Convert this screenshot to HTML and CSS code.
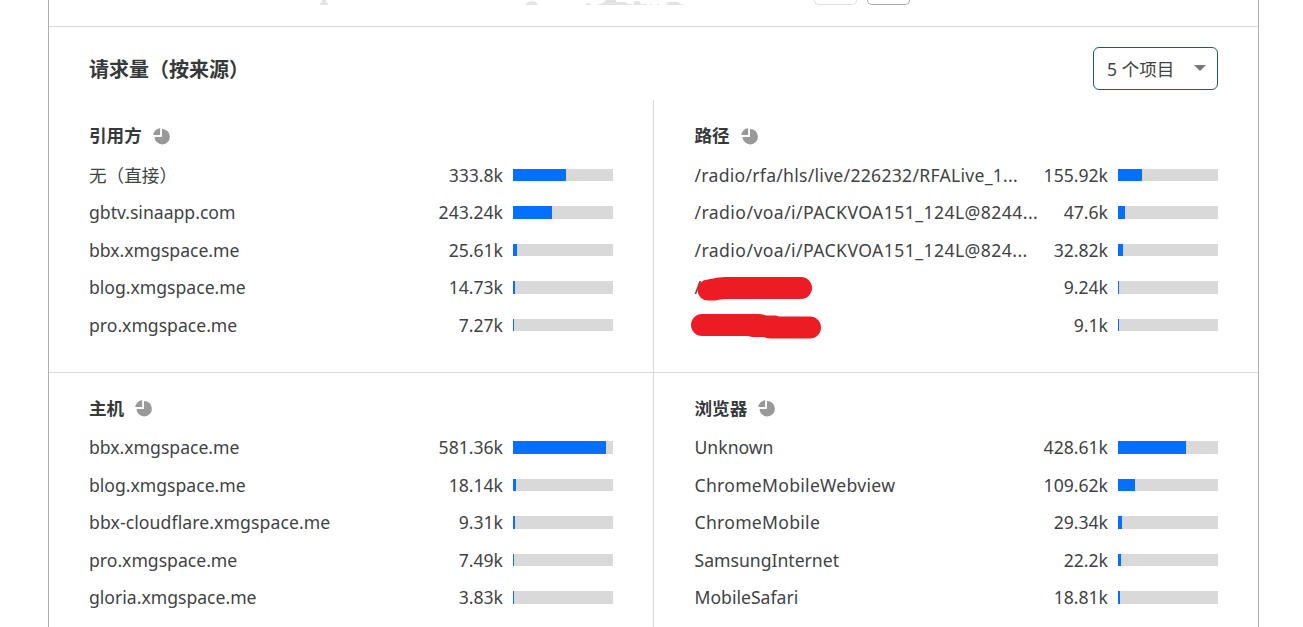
FILE: index.html
```html
<!DOCTYPE html>
<html lang="zh-CN">
    <head>
        <meta charset="UTF-8">
        <meta name="viewport" content="width=device-width, initial-scale=1.0">
        <title>请求量</title>
        <link rel="stylesheet" href="styles.css">
    </head>
    <body>
        <svg class="symbols">
            <symbol id="pie" viewBox="0 0 17 17">
                <path d="M7.1 0.3V7.1H0.3A7.2 7.2 0 0 1 7.1 0.3Z"/>
                <path d="M9 1A7.7 7.7 0 1 1 1.5 8.9H9Z"/>
            </symbol>
        </svg>
        <div class="card">
            <div class="previous">
                <svg class="map" width="380" height="6" viewBox="0 0 380 6">
                    <path d="M0 5V3L2 2V0H6V2L8 3V5ZM205 5L208 2L212 1L216 2L218 5ZM265 5L268 3L272 5ZM277 5L283 3L286 0H296V2L305 2L308 4H312V5ZM313 5L315 1H319L321 4H326V5ZM346 5L348 2H357L361 4L366 5ZM330 4H332V5H330ZM337 4H339V5H337Z"/>
                </svg>
                <div class="pager">
                    <span class="pager-button disabled"></span>
                    <span class="pager-button"></span>
                </div>
            </div>
            <div class="header">
                <h2>请求量（按来源）</h2>
                <div class="select"><span>5 个项目</span><i class="arrow"></i></div>
            </div>
            <div class="panels">
                <section class="panel">
                    <h3><span>引用方</span><svg class="pie"><use href="#pie"/></svg></h3>
                    <ul>
                        <li><span class="name">无（直接）</span><span class="value">333.8k</span><div class="bar"><div style="width: 53%"></div></div></li>
                        <li><span class="name">gbtv.sinaapp.com</span><span class="value">243.24k</span><div class="bar"><div style="width: 39%"></div></div></li>
                        <li><span class="name">bbx.xmgspace.me</span><span class="value">25.61k</span><div class="bar"><div style="width: 4%"></div></div></li>
                        <li><span class="name">blog.xmgspace.me</span><span class="value">14.73k</span><div class="bar"><div style="width: 2%"></div></div></li>
                        <li><span class="name">pro.xmgspace.me</span><span class="value">7.27k</span><div class="bar"><div style="width: 1%"></div></div></li>
                    </ul>
                </section>
                <section class="panel">
                    <h3><span>路径</span><svg class="pie"><use href="#pie"/></svg></h3>
                    <ul>
                        <li><span class="name wide">/radio/rfa/hls/live/226232/RFALive_1...</span><span class="value">155.92k</span><div class="bar"><div style="width: 24%"></div></div></li>
                        <li><span class="name path">/radio/voa/i/PACKVOA151_124L@8244...</span><span class="value">47.6k</span><div class="bar"><div style="width: 7%"></div></div></li>
                        <li><span class="name path">/radio/voa/i/PACKVOA151_124L@824...</span><span class="value">32.82k</span><div class="bar"><div style="width: 5%"></div></div></li>
                        <li><span class="name path">/</span><span class="value">9.24k</span><div class="bar"><div style="width: 1%"></div></div></li>
                        <li><span class="name path"></span><span class="value">9.1k</span><div class="bar"><div style="width: 1%"></div></div></li>
                    </ul>
                    <svg class="marker" width="134" height="64" viewBox="0 0 134 64">
                        <path d="M18 3.5Q27 1 35 1H111A11 11 0 0 1 111 23H36Q30 23 25 24.5H18A10.5 10.5 0 0 1 18 3.5Z"/>
                        <path d="M12 38H68Q73 38 76 39.5H86L89 40.5H120A11 11 0 0 1 120 62.5H82Q77 62.5 74 61H62L58 60H12A11 11 0 0 1 12 38Z"/>
                    </svg>
                </section>
                <section class="panel">
                    <h3><span>主机</span><svg class="pie"><use href="#pie"/></svg></h3>
                    <ul>
                        <li><span class="name">bbx.xmgspace.me</span><span class="value">581.36k</span><div class="bar"><div style="width: 93%"></div></div></li>
                        <li><span class="name">blog.xmgspace.me</span><span class="value">18.14k</span><div class="bar"><div style="width: 3%"></div></div></li>
                        <li><span class="name host">bbx-cloudflare.xmgspace.me</span><span class="value">9.31k</span><div class="bar"><div style="width: 2%"></div></div></li>
                        <li><span class="name">pro.xmgspace.me</span><span class="value">7.49k</span><div class="bar"><div style="width: 1%"></div></div></li>
                        <li><span class="name">gloria.xmgspace.me</span><span class="value">3.83k</span><div class="bar"><div style="width: 1%"></div></div></li>
                    </ul>
                </section>
                <section class="panel">
                    <h3><span>浏览器</span><svg class="pie"><use href="#pie"/></svg></h3>
                    <ul>
                        <li><span class="name">Unknown</span><span class="value">428.61k</span><div class="bar"><div style="width: 68%"></div></div></li>
                        <li><span class="name wide">ChromeMobileWebview</span><span class="value">109.62k</span><div class="bar"><div style="width: 17%"></div></div></li>
                        <li><span class="name wide">ChromeMobile</span><span class="value">29.34k</span><div class="bar"><div style="width: 4%"></div></div></li>
                        <li><span class="name">SamsungInternet</span><span class="value">22.2k</span><div class="bar"><div style="width: 3%"></div></div></li>
                        <li><span class="name">MobileSafari</span><span class="value">18.81k</span><div class="bar"><div style="width: 2%"></div></div></li>
                    </ul>
                </section>
            </div>
        </div>
    </body>
</html>
```
FILE: styles.css
```css
* {
    box-sizing: border-box;
}

body {
    margin: 0;
    height: 627px;
    overflow: hidden;
    background-color: #fff;
    color: #404344;
    font-family: "Noto Sans", "Noto Sans CJK SC", sans-serif;
    font-size: 17.6px;
}

.symbols {
    display: none;
}

.card {
    width: 1211px;
    height: 627px;
    margin-left: 48px;
    border: 1px solid #b0b0b0;
    border-width: 0 1px;
    overflow: hidden;
}

.previous {
    display: flex;
    height: 27px;
    padding-left: 271px;
    border-bottom: 1px solid #d9d9d9;
}

.map {
    flex: none;
    fill: #e3e3e3;
}

.pager {
    display: flex;
    gap: 10px;
    margin-left: 114px;
}

.pager-button {
    width: 43px;
    height: 5px;
    border: 1px solid #aaa;
    border-top: none;
    border-radius: 0 0 5px 5px;
}

.pager-button.disabled {
    border-color: #ddd;
}

.header {
    display: flex;
    justify-content: space-between;
    height: 73px;
    padding: 20px 40px 0;
}

h2 {
    margin: 0;
    color: #36393a;
    font-size: 20px;
    line-height: 45px;
}

.select {
    display: flex;
    align-items: center;
    justify-content: space-between;
    width: 125px;
    height: 43px;
    padding: 0 11px 1px 13px;
    border: 1px solid #1d5586;
    border-radius: 6px;
}

.arrow {
    border: 6px solid transparent;
    border-top-color: #777;
    border-bottom: none;
}

.panels {
    display: grid;
    grid-template-columns: 605px 604px;
    grid-template-rows: 273px 273px;
}

.panel {
    position: relative;
    padding: 16px 40px 0 40px;
    border-bottom: 1px solid #d9d9d9;
}

.panel:nth-child(odd) {
    border-right: 1px solid #d9d9d9;
}

.panel:nth-child(even) {
    padding-left: 40.5px;
}

.panel:nth-child(n+3) {
    padding-top: 15.5px;
}

h3 {
    display: flex;
    align-items: center;
    gap: 11px;
    height: 40px;
    margin: 0;
    color: #36393a;
    font-size: 17.6px;
}

h3 span {
    padding-bottom: 3px;
}

.pie {
    width: 17px;
    height: 17px;
    fill: #999;
}

ul {
    margin: 0;
    padding: 0;
    list-style: none;
}

li {
    display: flex;
    align-items: center;
    height: 37.5px;
    white-space: nowrap;
}

.name {
    flex: 1;
}

.name.path {
    letter-spacing: 0.43px;
}

.name.wide {
    letter-spacing: 0.27px;
}

.name.host {
    letter-spacing: 0.1px;
}

.value {
    margin-right: 10px;
}

.bar {
    width: 100px;
    height: 12.5px;
    background-color: #d9d9d9;
}

.bar div {
    height: 100%;
    background-color: #056fff;
}

.marker {
    position: absolute;
    left: 36px;
    top: 176px;
    fill: #ed1c24;
}
```
